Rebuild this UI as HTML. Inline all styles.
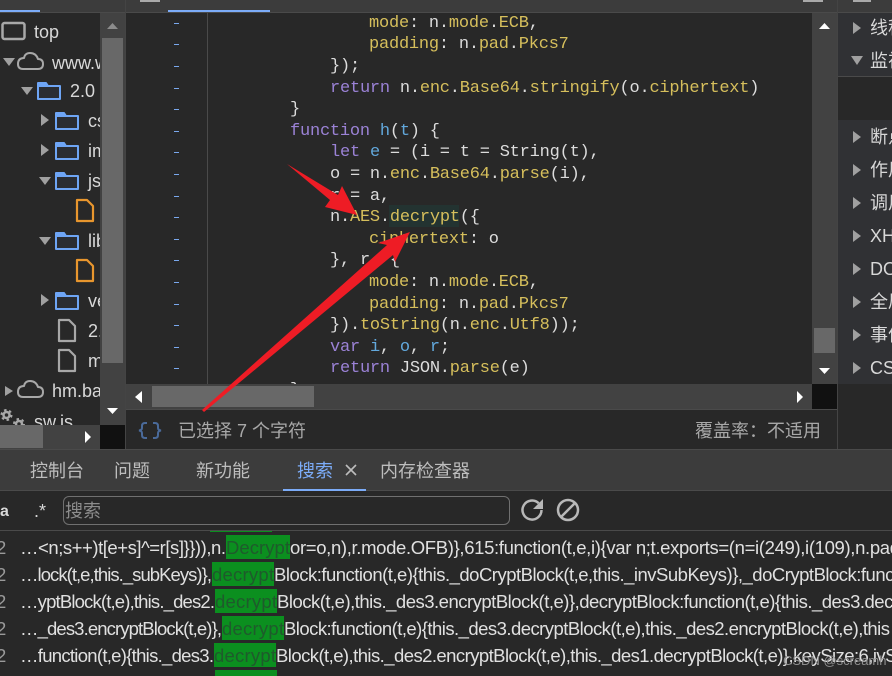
<!DOCTYPE html>
<html><head><meta charset="utf-8"><style>
html,body{margin:0;padding:0;background:#282828}
#r{position:relative;width:892px;height:676px;overflow:hidden;background:#282828;font-family:"Liberation Sans","Noto Sans CJK SC",sans-serif;font-size:18px;color:#d8d8d8}
#r div{position:absolute}
.t{white-space:nowrap;line-height:24px;height:24px}
.c{left:0;margin-top:1.800px;white-space:pre;font-family:"Liberation Mono",monospace;font-size:17px;letter-spacing:-.22px;line-height:21.6px;height:21.6px;color:#dcdcdc}
.k{color:#9b82d6}.b{color:#62a8dc}.y{color:#d6bf5c}
.d{left:174px;width:5px;height:1px;background:#7aa8ee}
svg{position:absolute;left:0;top:0;overflow:visible}
</style></head><body><div id="r">

<!-- top bar -->
<div style="left:0;top:0;width:892px;height:12px;background:#3c3c3c"></div>
<div style="left:0;top:12px;width:892px;height:1px;background:#4a4a4a"></div>
<div style="left:0;top:10px;width:40px;height:2px;background:#7cacf8"></div>
<div style="left:168px;top:10px;width:102px;height:2px;background:#7cacf8"></div>
<div style="left:125px;top:0;width:1px;height:449px;background:#444"></div>
<div style="left:837px;top:0;width:1px;height:449px;background:#444"></div>
<div style="left:140px;top:0;width:20px;height:2px;background:#aaa"></div>
<div style="left:803px;top:0;width:20px;height:2px;background:#aaa"></div>
<div style="left:853px;top:0;width:18px;height:2px;background:#aaa"></div>

<!-- left tree -->
<div style="left:0;top:13px;width:100px;height:412px;overflow:hidden">
 <div class="t" style="left:34px;top:7px">top</div>
 <div class="t" style="left:52px;top:38px">www.w</div>
 <div class="t" style="left:70px;top:66px">2.0</div>
 <div class="t" style="left:88px;top:96px">css</div>
 <div class="t" style="left:88px;top:126px">img</div>
 <div class="t" style="left:88px;top:156px">js</div>
 <div class="t" style="left:88px;top:216px">lib</div>
 <div class="t" style="left:88px;top:276px">vendor</div>
 <div class="t" style="left:88px;top:306px">2.</div>
 <div class="t" style="left:88px;top:336px">m</div>
 <div class="t" style="left:52px;top:366px">hm.ba</div>
 <div class="t" style="left:34px;top:397px">sw.js</div>
</div>
<svg width="100" height="425" viewBox="0 0 100 425" style="width:100px;height:425px" fill="none" stroke-linejoin="round">
 <rect x="2.500" y="23" width="22" height="16" rx="2" stroke="#a8a8a8" stroke-width="2.500"/>
 <g fill="#a0a0a0">
  <path d="M3 58H15L9 66Z"/><path d="M21 87H33L27 95Z"/><path d="M39 177H51L45 185Z"/><path d="M39 237H51L45 245Z"/>
  <path d="M41 114V126L49 120Z"/><path d="M41 144V156L49 150Z"/><path d="M41 294V306L49 300Z"/><path d="M5 386V396L13 391Z"/>
 </g>
 <path d="M23 69H38Q43 69 43 64Q43 59 38 59Q36 53 30 53Q25 53 24 58Q18 58 18 64Q18 69 23 69Z" stroke="#a8a8a8" stroke-width="2"/>
 <path d="M23 397H38Q43 397 43 392Q43 387 38 387Q36 381 30 381Q25 381 24 386Q18 386 18 392Q18 397 23 397Z" stroke="#a8a8a8" stroke-width="2"/>
 <g stroke="#6ea5f5" stroke-width="2" fill="#2a2d33">
  <path d="M38 83H46L48 86H60V99H38Z"/>
  <path d="M56 113H64L66 116H78V129H56Z"/>
  <path d="M56 143H64L66 146H78V159H56Z"/>
  <path d="M56 173H64L66 176H78V189H56Z"/>
  <path d="M56 233H64L66 236H78V249H56Z"/>
  <path d="M56 293H64L66 296H78V309H56Z"/>
 </g>
 <g fill="#6ea5f5">
  <path d="M38 83H46L48 87H38Z"/><path d="M56 113H64L66 117H56Z"/><path d="M56 143H64L66 147H56Z"/><path d="M56 173H64L66 177H56Z"/><path d="M56 233H64L66 237H56Z"/><path d="M56 293H64L66 297H56Z"/>
 </g>
 <g stroke="#e8962e" stroke-width="2.200">
  <path d="M77 200H87L93 206V221H77Z"/><path d="M77 260H87L93 266V281H77Z"/>
 </g>
 <g stroke="#a8a8a8" stroke-width="2.200">
  <path d="M59 320H69L75 326V341H59Z"/><path d="M59 350H69L75 356V371H59Z"/>
 </g>
 <circle cx="6.500" cy="415" r="3" stroke="#a8a8a8" stroke-width="2.500"/>
 <circle cx="6.500" cy="415" r="5" stroke="#a8a8a8" stroke-width="2" stroke-dasharray="2.500 2.730"/>
 <circle cx="19" cy="424" r="3" stroke="#a8a8a8" stroke-width="2.500"/>
 <circle cx="19" cy="424" r="5" stroke="#a8a8a8" stroke-width="2" stroke-dasharray="2.500 2.730"/>
</svg>
<div style="left:100px;top:13px;width:25px;height:412px;background:#424242"></div>
<div style="left:102px;top:38px;width:21px;height:325px;background:#686868"></div>
<svg width="125" height="449" style="width:125px;height:449px">
 <path d="M107 29L112.500 23L118 29Z" fill="#8c8c8c"/>
 <path d="M107 408L112.500 414L118 408Z" fill="#fff"/>
</svg>
<div style="left:0;top:425px;width:100px;height:24px;background:#424242"></div>
<div style="left:0;top:425px;width:43px;height:23px;background:#686868"></div>
<div style="left:100px;top:425px;width:25px;height:24px;background:#111"></div>
<svg width="100" height="449" style="width:100px;height:449px"><path d="M85 431V443L91 437Z" fill="#fff"/></svg>

<!-- code gutter -->
<div style="left:207px;top:13px;width:1px;height:371px;background:#4a4a4a"></div>
<div class="d" style="top:23px"></div><div class="d" style="top:44px"></div><div class="d" style="top:66px"></div><div class="d" style="top:88px"></div><div class="d" style="top:109px"></div><div class="d" style="top:131px"></div><div class="d" style="top:152px"></div><div class="d" style="top:174px"></div><div class="d" style="top:196px"></div><div class="d" style="top:217px"></div><div class="d" style="top:239px"></div><div class="d" style="top:260px"></div><div class="d" style="top:282px"></div><div class="d" style="top:304px"></div><div class="d" style="top:325px"></div><div class="d" style="top:347px"></div><div class="d" style="top:368px"></div>

<!-- code -->
<div style="left:389px;top:205px;width:70px;height:22px;background:#233331"></div>
<div class="c" style="left:369px;top:11px"><span class="y">mode</span>: n.<span class="y">mode</span>.<span class="y">ECB</span>,</div>
<div class="c" style="left:369px;top:32.600px"><span class="y">padding</span>: n.<span class="y">pad</span>.<span class="y">Pkcs7</span></div>
<div class="c" style="left:330px;top:54.200px">});</div>
<div class="c" style="left:330px;top:75.800px"><span class="k">return</span> n.<span class="y">enc</span>.<span class="y">Base64</span>.<span class="y">stringify</span>(o.<span class="y">ciphertext</span>)</div>
<div class="c" style="left:290px;top:97.400px">}</div>
<div class="c" style="left:290px;top:119px"><span class="k">function</span> <span class="b">h</span>(<span class="b">t</span>) {</div>
<div class="c" style="left:330px;top:140.600px"><span class="k">let</span> <span class="b">e</span> = (i = t = String(t),</div>
<div class="c" style="left:330px;top:162.200px">o = n.<span class="y">enc</span>.<span class="y">Base64</span>.<span class="y">parse</span>(i),</div>
<div class="c" style="left:330px;top:183.800px">r = a,</div>
<div class="c" style="left:330px;top:205.400px">n.<span class="y">AES</span>.<span class="y">decrypt</span>({</div>
<div class="c" style="left:369px;top:227px"><span class="y">ciphertext</span>: o</div>
<div class="c" style="left:330px;top:248.600px">}, r, {</div>
<div class="c" style="left:369px;top:270.200px"><span class="y">mode</span>: n.<span class="y">mode</span>.<span class="y">ECB</span>,</div>
<div class="c" style="left:369px;top:291.800px"><span class="y">padding</span>: n.<span class="y">pad</span>.<span class="y">Pkcs7</span></div>
<div class="c" style="left:330px;top:313.400px">}).<span class="y">toString</span>(n.<span class="y">enc</span>.<span class="y">Utf8</span>));</div>
<div class="c" style="left:330px;top:335px"><span class="k">var</span> <span class="b">i</span>, <span class="b">o</span>, <span class="b">r</span>;</div>
<div class="c" style="left:330px;top:356.600px"><span class="k">return</span> JSON.<span class="y">parse</span>(e)</div>
<div class="c" style="left:290px;top:378px">}</div>

<!-- editor scrollbars -->
<div style="left:812px;top:13px;width:25px;height:371px;background:#424242"></div>
<div style="left:814px;top:328px;width:21px;height:25px;background:#686868"></div>
<div style="left:126px;top:384px;width:686px;height:25px;background:#424242"></div>
<div style="left:152px;top:386px;width:162px;height:21px;background:#686868"></div>
<div style="left:812px;top:384px;width:25px;height:25px;background:#111"></div>
<div style="left:126px;top:409px;width:711px;height:1px;background:#4a4a4a"></div>

<!-- status -->
<div class="t" style="left:178px;top:419px;color:#a8a8a8">已选择 7 个字符</div>
<div class="t" style="left:695px;top:419px;color:#a8a8a8">覆盖率&#65306;不适用</div>

<!-- right panel -->
<div style="left:838px;top:13px;width:54px;height:371px;background:#303134"></div>
<div style="left:838px;top:77px;width:54px;height:43px;background:#282828"></div>
<div style="left:838px;top:76px;width:54px;height:1px;background:#4a4a4a"></div>
<div class="t" style="left:870px;top:16px">线程</div>
<div class="t" style="left:870px;top:49px">监视</div>
<div class="t" style="left:870px;top:125px">断点</div>
<div class="t" style="left:870px;top:158px">作用域</div>
<div class="t" style="left:870px;top:191px">调用堆栈</div>
<div class="t" style="left:870px;top:224px">XHR</div>
<div class="t" style="left:870px;top:257px">DOM</div>
<div class="t" style="left:870px;top:290px">全局</div>
<div class="t" style="left:870px;top:323px">事件</div>
<div class="t" style="left:870px;top:356px">CSP</div>
<svg width="892" height="449" style="width:892px;height:449px">
 <g fill="#a0a0a0">
  <path d="M853 22V34L861 28Z"/><path d="M851 56H863L857 65Z"/><path d="M853 131V143L861 137Z"/><path d="M853 164V176L861 170Z"/><path d="M853 197V209L861 203Z"/><path d="M853 230V242L861 236Z"/><path d="M853 263V275L861 269Z"/><path d="M853 296V308L861 302Z"/><path d="M853 329V341L861 335Z"/><path d="M853 362V374L861 368Z"/>
 </g>
 <path d="M819 29L824.500 23L830 29Z" fill="#fff"/>
 <path d="M819 368L824.500 374L830 368Z" fill="#fff"/>
 <path d="M142 391V403L135 397Z" fill="#fff"/>
 <path d="M797 391V403L803 397Z" fill="#fff"/>
 <path d="M147 423H145Q142 423 142 426V428Q142 430 139 430.500Q142 431 142 433V435Q142 438 145 438H147" fill="none" stroke="#4a6a9a" stroke-width="2"/>
 <path d="M153 423H155Q158 423 158 426V428Q158 430 161 430.500Q158 431 158 433V435Q158 438 155 438H153" fill="none" stroke="#4a6a9a" stroke-width="2"/>
</svg>

<!-- bottom panel -->
<div style="left:0;top:449px;width:892px;height:41px;background:#3c3c3c"></div>
<div style="left:0;top:449px;width:892px;height:1px;background:#4a4a4a"></div>
<div style="left:0;top:490px;width:892px;height:1px;background:#4a4a4a"></div>
<div style="left:283px;top:489px;width:83px;height:2px;background:#7cacf8"></div>
<div class="t" style="left:30px;top:459px;color:#bdbdbd">控制台</div>
<div class="t" style="left:114px;top:459px;color:#bdbdbd">问题</div>
<div class="t" style="left:196px;top:459px;color:#bdbdbd">新功能</div>
<div class="t" style="left:297px;top:459px;color:#7cacf8">搜索</div>
<div class="t" style="left:380px;top:459px;color:#bdbdbd">内存检查器</div>
<div class="t" style="left:0;top:500px;font-weight:bold;font-size:16px">a</div>
<div class="t" style="left:34px;top:499px">.*</div>
<div style="left:63px;top:496px;width:445px;height:27px;border:1px solid #707070;border-radius:6px"></div>
<div class="t" style="left:65px;top:499px;color:#8c8c8c">搜索</div>
<div style="left:0;top:530px;width:892px;height:1px;background:#4a4a4a"></div>
<svg width="892" height="676" style="width:892px;height:676px" fill="none">
 <path d="M346 465L356 475M356 465L346 475" stroke="#bdbdbd" stroke-width="1.600"/>
 <path d="M538.700 503.300A9.500 9.500 0 1 0 541.500 510" stroke="#b8b8b8" stroke-width="2.500"/>
 <path d="M543 499V509H533Z" fill="#b8b8b8"/>
 <circle cx="568" cy="510" r="10" stroke="#b8b8b8" stroke-width="2.500"/>
 <path d="M561 517L575 503" stroke="#b8b8b8" stroke-width="2.500"/>
</svg>

<!-- results -->
<div style="left:210px;top:531px;width:62px;height:1px;background:#0b8f1f"></div>
<div style="left:226px;top:535px;width:64px;height:24px;background:#0b8f1f"></div>
<div style="left:212px;top:562px;width:62px;height:24px;background:#0b8f1f"></div>
<div style="left:215px;top:589px;width:62px;height:24px;background:#0b8f1f"></div>
<div style="left:222px;top:616px;width:62px;height:24px;background:#0b8f1f"></div>
<div style="left:214px;top:643px;width:62px;height:24px;background:#0b8f1f"></div>
<div style="left:215px;top:670px;width:62px;height:6px;background:#0b8f1f"></div>
<svg width="892" height="676" style="width:892px;height:676px;font-family:'Liberation Sans',sans-serif;font-size:18.500px" fill="#e0e0e0">
 <g fill="#9a9a9a"><text x="-4" y="554">2</text><text x="-4" y="581">2</text><text x="-4" y="608">2</text><text x="-4" y="635">2</text><text x="-4" y="662">2</text></g>
 <text x="20" y="554" textLength="206" lengthAdjust="spacing">…&lt;n;s++)t[e+s]^=r[s]}})),n.</text>
 <text x="226" y="554" textLength="64" lengthAdjust="spacing" fill="#1f5a2c">Decrypt</text>
 <text x="290" y="554" textLength="610" lengthAdjust="spacing">or=o,n),r.mode.OFB)},615:function(t,e,i){var n;t.exports=(n=i(249),i(109),n.pad</text>
 <text x="20" y="581" textLength="192" lengthAdjust="spacing">…lock(t,e,this._subKeys)},</text>
 <text x="212" y="581" textLength="62" lengthAdjust="spacing" fill="#1f5a2c">decrypt</text>
 <text x="274" y="581" textLength="625" lengthAdjust="spacing">Block:function(t,e){this._doCryptBlock(t,e,this._invSubKeys)},_doCryptBlock:funct</text>
 <text x="20" y="608" textLength="195" lengthAdjust="spacing">…yptBlock(t,e),this._des2.</text>
 <text x="215" y="608" textLength="62" lengthAdjust="spacing" fill="#1f5a2c">decrypt</text>
 <text x="277" y="608" textLength="622" lengthAdjust="spacing">Block(t,e),this._des3.encryptBlock(t,e)},decryptBlock:function(t,e){this._des3.decr</text>
 <text x="20" y="635" textLength="202" lengthAdjust="spacing">…_des3.encryptBlock(t,e)},</text>
 <text x="222" y="635" textLength="62" lengthAdjust="spacing" fill="#1f5a2c">decrypt</text>
 <text x="284" y="635" textLength="606" lengthAdjust="spacing">Block:function(t,e){this._des3.decryptBlock(t,e),this._des2.encryptBlock(t,e),this</text>
 <text x="20" y="662" textLength="194" lengthAdjust="spacing">…function(t,e){this._des3.</text>
 <text x="214" y="662" textLength="62" lengthAdjust="spacing" fill="#1f5a2c">decrypt</text>
 <text x="276" y="662" textLength="625" lengthAdjust="spacing">Block(t,e),this._des2.encryptBlock(t,e),this._des1.decryptBlock(t,e)},keySize:6,ivSi</text>
 <text x="783" y="665" font-size="13" fill="#8f8f8f">CSDN @screamh</text>
</svg>

<!-- arrows -->
<svg width="892" height="676" style="width:892px;height:676px">
 <path d="M287 164L338 195L342 186L357 215L325 207L330 200Z" fill="#ee1c25"/>
 <path d="M410 232L378 243L387 245L202 410L204 412L393 255L395 262Z" fill="#ee1c25"/>
</svg>
</div></body></html>
